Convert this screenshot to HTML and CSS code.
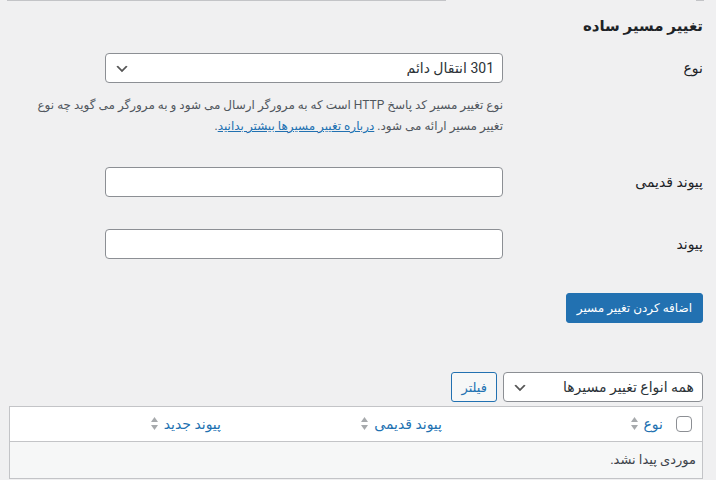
FILE: index.html
```html
<!DOCTYPE html>
<html lang="fa" dir="rtl">
<head>
    <meta charset="UTF-8">
    <meta name="viewport" content="width=device-width, initial-scale=1.0">
    <title>تغییر مسیر ساده</title>
    <link rel="stylesheet" href="styles.css">
</head>
<body>
    <div class="wrap">
        <div class="prev-edge"><span class="edge-a"></span><span class="edge-b"></span></div>
        <h2 class="title">تغییر مسیر ساده</h2>

        <div class="form-table">
            <div class="form-row">
                <label class="form-label" for="redirect_type">نوع</label>
                <div class="form-field">
                    <select id="redirect_type" class="select">
                        <option>301 انتقال دائم</option>
                        <option>302 انتقال موقت</option>
                    </select>
                    <p class="description">نوع تغییر مسیر کد پاسخ HTTP است که به مرورگر ارسال می شود و به مرورگر می گوید چه نوع تغییر مسیر ارائه می شود. <a href="#">درباره تغییر مسیرها بیشتر بدانید</a>.</p>
                </div>
            </div>
            <div class="form-row">
                <label class="form-label" for="old_url">پیوند قدیمی</label>
                <div class="form-field">
                    <input type="text" id="old_url" class="text-input">
                </div>
            </div>
            <div class="form-row">
                <label class="form-label" for="new_url">پیوند</label>
                <div class="form-field">
                    <input type="text" id="new_url" class="text-input">
                </div>
            </div>
        </div>

        <div class="submit-row">
            <button id="add-button" class="button-primary">اضافه کردن تغییر مسیر</button>
        </div>

        <div class="tablenav">
            <select id="filter_type" class="select filter-select">
                <option>همه انواع تغییر مسیرها</option>
                <option>301 انتقال دائم</option>
                <option>302 انتقال موقت</option>
            </select>
            <button id="filter-button" class="button">فیلتر</button>
        </div>

        <table class="list-table">
            <colgroup>
                <col class="col-check">
                <col>
                <col>
                <col>
            </colgroup>
            <thead>
                <tr>
                    <th class="check-column"><input type="checkbox" class="checkbox"></th>
                    <th><a href="#" class="sort-link">نوع <span class="sort-icon"><svg width="7" height="14" viewBox="0 0 7 14"><path d="M3.5 0 L7 5 L0 5 Z"/><path d="M0 8 L7 8 L3.5 13 Z"/></svg></span></a></th>
                    <th><a href="#" class="sort-link">پیوند قدیمی <span class="sort-icon"><svg width="7" height="14" viewBox="0 0 7 14"><path d="M3.5 0 L7 5 L0 5 Z"/><path d="M0 8 L7 8 L3.5 13 Z"/></svg></span></a></th>
                    <th><a href="#" class="sort-link">پیوند جدید <span class="sort-icon"><svg width="7" height="14" viewBox="0 0 7 14"><path d="M3.5 0 L7 5 L0 5 Z"/><path d="M0 8 L7 8 L3.5 13 Z"/></svg></span></a></th>
                </tr>
            </thead>
            <tbody>
                <tr class="no-items">
                    <td colspan="4">موردی پیدا نشد.</td>
                </tr>
            </tbody>
        </table>
    </div>
</body>
</html>
```

FILE: styles.css
```css
body {
    margin: 0;
    background: #f0f0f1;
    font-family: Roboto, "DejaVu Sans", sans-serif;
    font-size: 13px;
    color: #3c434a;
    overflow: hidden;
}
.wrap {
    margin: 0 13px 0 9px;
}
.prev-edge {
    display: flex;
    direction: ltr;
    justify-content: space-between;
    height: 1px;
}
.edge-a {
    width: 439px;
    margin-left: -2px;
    background: #c3c4c7;
}
.edge-b {
    width: 8px;
    margin-right: -1px;
    background: #c3c4c7;
}
.title {
    margin: 0;
    padding-top: 13px;
    font-size: 15px;
    line-height: 24px;
    font-weight: bold;
    color: #1d2327;
}
.form-row {
    display: flex;
    align-items: flex-start;
    padding: 15px 0;
}
.form-label {
    width: 200px;
    flex-shrink: 0;
    line-height: 30px;
    font-size: 14px;
    color: #1d2327;
}
.form-field {
    flex: 1;
    padding-left: 10px;
}
.select {
    -webkit-appearance: none;
    appearance: none;
    box-sizing: border-box;
    width: 398px;
    height: 30px;
    margin: 0;
    padding: 0 8px 0 24px;
    border: 1px solid #8c8f94;
    border-radius: 4px;
    background: #fff url("data:image/svg+xml,%3Csvg xmlns='http://www.w3.org/2000/svg' width='20' height='20' viewBox='0 0 20 20'%3E%3Cpath d='M5 6l5 5 5-5 2 1-7 7-7-7z' fill='%23555'/%3E%3C/svg%3E") no-repeat left 8px top 55%;
    background-size: 16px 16px;
    font-family: inherit;
    font-size: 14px;
    color: #2c3338;
}
.description {
    margin: 12px 0 0;
    line-height: 21px;
    font-size: 12px;
    color: #50575e;
}
.description a {
    color: #2271b1;
}
.text-input {
    box-sizing: border-box;
    width: 398px;
    height: 30px;
    margin: 0 0 2px;
    padding: 0 8px;
    border: 1px solid #8c8f94;
    border-radius: 4px;
    background: #fff;
    font-family: inherit;
    font-size: 14px;
}
.submit-row {
    margin-top: 17px;
}
.button-primary {
    height: 30px;
    padding: 0 10px;
    border: 1px solid #2271b1;
    border-radius: 3px;
    background: #2271b1;
    color: #fff;
    font-family: inherit;
    font-size: 12px;
    cursor: pointer;
}
.tablenav {
    display: flex;
    gap: 6px;
    margin-top: 49px;
    height: 30px;
}
.filter-select {
    width: 200px;
}
.button {
    height: 30px;
    padding: 0 9px;
    border: 1px solid #2271b1;
    border-radius: 3px;
    background: #f6f7f7;
    color: #2271b1;
    font-family: inherit;
    font-size: 13px;
    cursor: pointer;
}
.list-table {
    width: 100%;
    margin-top: 4px;
    border: 1px solid #c3c4c7;
    border-spacing: 0;
    table-layout: fixed;
    background: #fff;
}
.col-check {
    width: 29px;
}
.list-table th {
    padding: 8px 10px;
    line-height: 18px;
    text-align: right;
    font-weight: normal;
    font-size: 14px;
    border-bottom: 1px solid #c3c4c7;
}
.list-table th.check-column {
    padding: 8px 10px 8px 0;
}
.checkbox {
    -webkit-appearance: none;
    appearance: none;
    display: block;
    width: 16px;
    height: 16px;
    margin: 0;
    border: 1px solid #8c8f94;
    border-radius: 4px;
    background: #fff;
}
.sort-link {
    display: inline-flex;
    align-items: center;
    gap: 6px;
    color: #2271b1;
    text-decoration: none;
}
.sort-icon svg {
    display: block;
    fill: #a7aaad;
}
.no-items td {
    padding: 8px 6px;
    line-height: 20px;
    background: #f6f7f7;
    color: #3c434a;
}
```
